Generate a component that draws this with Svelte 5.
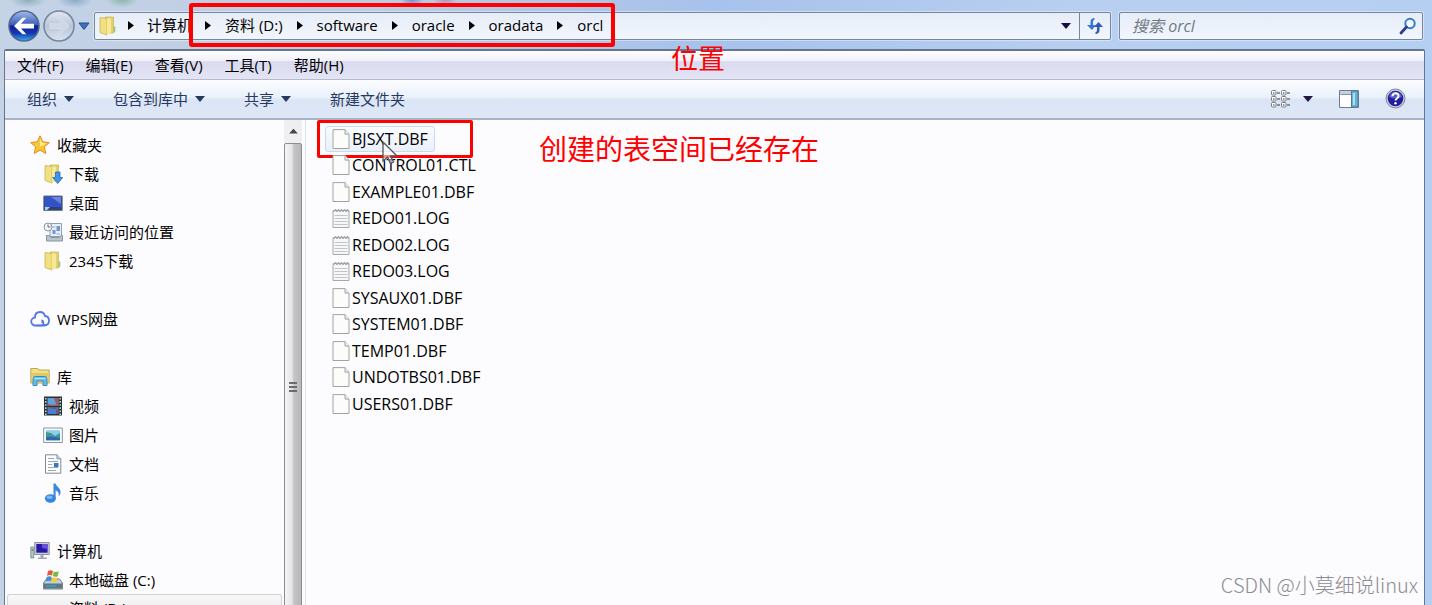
<script lang="ts">
  type NavItem = { name: string; icon: string; selected?: boolean };
  type NavGroup = NavItem & { items: NavItem[] };

  const path = ['资料 (D:)', 'software', 'oracle', 'oradata', 'orcl'];
  const menus = ['文件(F)', '编辑(E)', '查看(V)', '工具(T)', '帮助(H)'];
  const commands = [
    { name: '组织', menu: true },
    { name: '包含到库中', menu: true },
    { name: '共享', menu: true },
    { name: '新建文件夹', menu: false },
  ];

  const groups: NavGroup[] = [
    {
      name: '收藏夹',
      icon: 'star',
      items: [
        { name: '下载', icon: 'download' },
        { name: '桌面', icon: 'desktop' },
        { name: '最近访问的位置', icon: 'recent' },
        { name: '2345下载', icon: 'folder' },
      ],
    },
    { name: 'WPS网盘', icon: 'cloud', items: [] },
    {
      name: '库',
      icon: 'library',
      items: [
        { name: '视频', icon: 'video' },
        { name: '图片', icon: 'picture' },
        { name: '文档', icon: 'document' },
        { name: '音乐', icon: 'music' },
      ],
    },
    {
      name: '计算机',
      icon: 'computer',
      items: [
        { name: '本地磁盘 (C:)', icon: 'system' },
        { name: '资料 (D:)', icon: 'drive', selected: true },
      ],
    },
  ];

  const files = [
    'BJSXT.DBF',
    'CONTROL01.CTL',
    'EXAMPLE01.DBF',
    'REDO01.LOG',
    'REDO02.LOG',
    'REDO03.LOG',
    'SYSAUX01.DBF',
    'SYSTEM01.DBF',
    'TEMP01.DBF',
    'UNDOTBS01.DBF',
    'USERS01.DBF',
  ];

  let query = $state('');
  let active = $state('BJSXT.DBF');
</script>

{#snippet caret()}
  <svg class="caret" viewBox="0 0 10 6" aria-hidden="true"><path d="M0 0h10L5 6z" fill="currentColor" /></svg>
{/snippet}

{#snippet chevron()}
  <svg class="chevron" viewBox="0 0 6 9" aria-hidden="true"><path d="M0 0v9l6-4.5z" fill="#000" /></svg>
{/snippet}

{#snippet icon(name: string)}
  <svg class="icon" viewBox="0 0 20 20" aria-hidden="true">
    {#if name === 'star'}
      <path d="M10 .8l2.700 6 6.600.7-4.900 4.400 1.400 6.600L10 15.200l-5.800 3.300 1.400-6.600L.7 7.500l6.600-.7z" fill="#fbc631" stroke="#dc8d2c" stroke-linejoin="round" />
      <path d="M10 3.500l1.800 4.300 4.500.6-6.300 3z" fill="#fff0a0" />
    {:else if name === 'folder' || name === 'download'}
      <path d="M7 1h8.500v16H7z" fill="#e3cf6e" stroke="#c9b456" stroke-width=".7" />
      <path d="M2 1.500l7 1V19l-7-2.500z" fill="#f0df83" stroke="#ccb653" stroke-width=".8" />
      <path d="M9 2.500h4V17l-4 2z" fill="#f6e996" />
      {#if name === 'download'}
        <path d="M12.500 8h4.500v5.500h2.700l-5 6-5-6h2.800z" fill="#3f93ea" stroke="#2465b5" stroke-width=".8" />
      {:else}
        <path d="M15.500 10.500h1.800v5l-1.800 1.500z" fill="#9fc27d" />
      {/if}
    {:else if name === 'desktop'}
      <path d="M.8 3h18.400v14.500H.8z" fill="#263f8a" stroke="#6b7794" />
      <path d="M2 4h16v10H2z" fill="#3553c8" />
      <path d="M8 4h10v7z" fill="#6d83e3" />
      <path d="M1 15.500h18V17H1z" fill="#334961" />
      <path d="M2 14h5l-3 3H2z" fill="#9ddaf4" />
    {:else if name === 'recent'}
      <path d="M7 1.500h11.500v13H7z" fill="#e7eef7" stroke="#8fa0b5" />
      <path d="M9.500 8h3v4h-3zM13.500 4h3.500v5h-3.500z" fill="#7396cf" />
      <path d="M9.500 5h3M13.500 12h3.500" stroke="#8eabd6" />
      <path d="M3.500 13.500h3l1 2h9l1.500-2h1.500v5.500h-16z" fill="#b9c3cb" stroke="#8996a2" />
      <circle cx="5" cy="5" r="4" fill="#f3f4f5" stroke="#8c969e" />
      <path d="M5 2.500V5h2.500" fill="none" stroke="#5f6f7e" />
    {:else if name === 'cloud'}
      <path d="M5.500 16.500a4 4 0 0 1-.5-8C5 5 7.200 3 10 3c2.600 0 4.400 1.500 4.900 4 2.400.2 4.100 2 4.100 4.600 0 3-2 4.900-4.700 4.900z" fill="none" stroke="#5677ea" stroke-width="1.800" />
      <path d="M6 16.500h5.500a2.900 2.900 0 0 0 0-5.500M11.500 12.500l4 4" fill="none" stroke="#5677ea" stroke-width="1.600" />
    {:else if name === 'library'}
      <path d="M.8 1.500h7l1 1.500h10.400v13H.8z" fill="#f0df83" stroke="#bda957" />
      <path d="M1.500 6h17v4h-17z" fill="#dec968" />
      <path d="M3 18.500V12q0-2.500 2.500-2.500h9Q17 9.500 17 12v6.500h-4V14H7v4.500z" fill="#66bde9" stroke="#378db9" />
      <path d="M4.500 11.500h11" stroke="#b9e9fa" />
    {:else if name === 'video'}
      <path d="M1 .5h18v19H1z" fill="#293038" />
      <path d="M4.500 2h11v8h-11z" fill="#5ca4dc" />
      <path d="M4.500 11h11v7h-11z" fill="#487fd0" />
      <path d="M11 2h4.500v6H13zM5 8l5 1 5-1v2H5z" fill="#9f5c5a" />
      <path d="M5 11h10l-2 2v5h2.500v-3L13 13l-6-.5z" fill="#795463" />
      <path d="M2.800 2v17M17.200 2v17" stroke="#d4e2e4" stroke-width="1.400" stroke-dasharray="1.600 1.500" />
    {:else if name === 'picture'}
      <path d="M.7 3h18.600v14.500H.7z" fill="#fff" stroke="#8496a7" />
      <path d="M3 5.200h14v10H3z" fill="#8bcdf0" />
      <path d="M3 7l5 1 4 3 5-3v7.200H3z" fill="#3f9b91" />
      <path d="M3 12q6-1 14 1v2.200H3z" fill="#3165b3" />
    {:else if name === 'document'}
      <path d="M2.500.8H14l3.800 4v14.400H2.500z" fill="#fbfcfd" stroke="#818a92" />
      <path d="M14 .8v4h3.800" fill="#d5e2ed" stroke="#818a92" />
      <path d="M5 4.500h6M5 7.500h10M5 10.500h4M5 13.500h10M5 16.500h8" stroke="#9da9b3" />
      <path d="M11 9h4.500v4H11z" fill="#3778c3" />
    {:else if name === 'music'}
      <path d="M10.500.5h2c.5 3 5.700 4.500 5 9.300-.2 1.600-1 2.900-1.900 3.500 1-3.500-.8-4.800-3-6v8.300h-2.100z" fill="#3987dc" />
      <ellipse cx="7.400" cy="15.500" rx="5.500" ry="4.200" fill="#3485e5" />
      <ellipse cx="6.500" cy="14.300" rx="3" ry="1.700" fill="#7ab7f7" />
    {:else if name === 'computer'}
      <path d="M.8 6h3v11h-3z" fill="#b8c7bd" stroke="#77877d" stroke-width=".8" />
      <path d="M1.500 8h1.500v2H1.500z" fill="#52a44b" />
      <path d="M4.700 1.500h14.500v12H4.700z" fill="#c9ccda" stroke="#8d91a9" />
      <path d="M6.300 3h11.300v8.700H6.300z" fill="#2719a1" />
      <path d="M12 3h5.600v5L12 7z" fill="#6750da" />
      <path d="M10.500 14h3v2.500H17V18H8v-1.500h2.500z" fill="#9fa7af" />
    {:else}
      <path d="M3.500 9h13L19.500 13v6H.5v-6z" fill="#c6cdd2" stroke="#76828c" />
      <path d="M1 13.500h18v5H1z" fill="#607683" />
      <path d="M3 15h10v2H3z" fill="#399bb1" />
      {#if name === 'system'}
        <path d="M5 1q2.500-1.400 5 0L9 5.500q-2.500-1-5 .4z" fill="#e45c2f" />
        <path d="M10.800 1.400q2.500 1.200 5-.2l-1.100 5q-2.500 1.200-4.900-.3z" fill="#75b947" />
        <path d="M3.700 7q2.500-1.400 5-.3l-1 4.500q-2.600-1.200-5 .3z" fill="#418dd5" />
        <path d="M9.600 7.100q2.500 1.400 4.900.2l-1.200 4.600q-2.500 1-4.800-.4z" fill="#f8c93b" />
      {/if}
    {/if}
  </svg>
{/snippet}

{#snippet fileIcon(name: string)}
  <svg class="file-icon" viewBox="0 0 18 20" aria-hidden="true">
    {#if name.endsWith('.LOG')}
      <path d="M1 2.500h16v17H1z" fill="#f7f7f7" stroke="#a8a8a8" />
      <path d="M2.500 7.500h13M2.500 10.500h13M2.500 13.500h13M2.500 16.500h13" stroke="#bfc6cb" />
      <path d="M2 4l1.500-3L5 4l1.500-3L8 4l1.500-3L11 4l1.500-3L14 4l1.500-3 1 3" fill="none" stroke="#a2a2a2" />
    {:else}
      <path d="M1 .6h12l4 4.500v14.400H1z" fill="#fcfcfb" stroke="#a2a2a2" />
      <path d="M13 .6v4.500h4" fill="#eee" stroke="#a2a2a2" />
    {/if}
  </svg>
{/snippet}

<div class="explorer">
  <header class="nav-bar">
    <button class="round" aria-label="后退">
      <svg viewBox="0 0 32 32" aria-hidden="true">
        <defs>
          <linearGradient id="back" x1="0" y1="0" x2="0" y2="1">
            <stop offset="0" stop-color="#a3bce8" />
            <stop offset=".45" stop-color="#3c5fbd" />
            <stop offset=".5" stop-color="#10209a" />
            <stop offset=".75" stop-color="#1438b4" />
            <stop offset="1" stop-color="#38b0ef" />
          </linearGradient>
        </defs>
        <circle cx="16" cy="16" r="15" fill="url(#back)" stroke="#53668c" stroke-width="1.500" />
        <path d="M6 16l8.500-8.200h3.800L13 13.800h13v4.600H13l5.300 5.900h-3.800z" fill="#fff" />
      </svg>
    </button>
    <button class="round" aria-label="前进">
      <svg viewBox="0 0 32 32" aria-hidden="true">
        <defs>
          <linearGradient id="forward" x1="0" y1="0" x2="0" y2="1">
            <stop offset="0" stop-color="#e3e8f0" />
            <stop offset=".5" stop-color="#b9c6d9" />
            <stop offset="1" stop-color="#d9e2f0" />
          </linearGradient>
        </defs>
        <circle cx="16" cy="16" r="15" fill="url(#forward)" stroke="#76839b" stroke-width="1.500" />
        <path d="M26 16l-8.500-8.200h-3.800l5.300 6H7v4.600h12l-5.300 5.900h3.800z" fill="#cdd7e5" stroke="#d6dfea" />
      </svg>
    </button>
    <button class="history" aria-label="最近的页面">
      <svg viewBox="0 0 12 9" aria-hidden="true"><path d="M1 1h10L6 7.500z" fill="#3c72bd" stroke="#24488c" /></svg>
    </button>

    <div class="address">
      {@render icon('folder')}
      <nav class="crumbs" aria-label="地址">
        {@render chevron()}
        <a href="#computer">计算机</a>
        <span class="marked">
          {#each path as part}
            {@render chevron()}
            <a href="#{part}">{part}</a>
          {/each}
        </span>
      </nav>
      <button class="drop" aria-label="以前的位置">{@render caret()}</button>
      <button class="refresh" aria-label="刷新">
        <svg viewBox="0 0 18 18" aria-hidden="true">
          <path d="M8 1Q4.500 1.500 4.500 5v3H1l5 5 4-5H7V5q0-2 2-3z" fill="#3678cb" />
          <path d="M10 17q3.500-.5 3.500-4v-3H17l-4.500-5L8 10h3v3q0 2-2 3z" fill="#3158b6" />
        </svg>
      </button>
    </div>

    <div class="search">
      <input type="search" aria-label="搜索 orcl" placeholder="搜索 orcl" bind:value={query} />
      <svg viewBox="0 0 18 18" aria-hidden="true">
        <circle cx="11" cy="6.500" r="4.700" fill="#f3f8fe" stroke="#397cc6" stroke-width="2" />
        <path d="M7.500 10L2 16" stroke="#293e91" stroke-width="2.800" stroke-linecap="round" />
      </svg>
    </div>
    <span class="note note-path">位置</span>
  </header>

  <div class="window">
    <div class="menu-bar">
      {#each menus as menu}
        <button>{menu}</button>
      {/each}
    </div>

    <div class="toolbar">
      {#each commands as command}
        <button class="command">
          {command.name}
          {#if command.menu}{@render caret()}{/if}
        </button>
      {/each}
      <div class="tools">
        <button class="view" aria-label="更改您的视图">
          <svg class="view-icon" viewBox="0 0 20 18" aria-hidden="true">
            {#each [0, 10] as x}
              {#each [1, 7, 13] as y}
                <rect x={x + 0.5} y={y - 0.5} width="4.500" height="4.500" rx="1" fill="#fff" stroke="#777d86" />
                <path d="M{x + 2} {y + 2}h1.500M{x + 6} {y + 2}h3" stroke="#6f7580" stroke-width="1.300" />
              {/each}
            {/each}
          </svg>
          {@render caret()}
        </button>
        <button aria-label="显示预览窗格">
          <svg class="pane-icon" viewBox="0 0 20 18" aria-hidden="true">
            <path d="M.5.5h19v17H.5z" fill="#fff" stroke="#667c94" />
            <path d="M1 1h18v3.500H1z" fill="#c5d1df" />
            <path d="M1.500 4.500h11" stroke="#8293a6" />
            <path d="M12.500 1h6.500v16h-6.500z" fill="#62b5d7" stroke="#5b7892" />
            <path d="M14 3h2v12h-2z" fill="#a9e0ef" />
          </svg>
        </button>
        <button aria-label="获取帮助">
          <svg class="help-icon" viewBox="0 0 21 21" aria-hidden="true">
            <circle cx="10.500" cy="10.500" r="9.500" fill="#c8cddb" stroke="#82899f" />
            <circle cx="10.500" cy="10.500" r="7.800" fill="#251d9f" />
            <path d="M4 9a6.700 6.700 0 0 1 13 0q-6 3-13 0z" fill="#5363c4" />
            <path d="M7.500 8.300c0-4 6.300-3.900 6 0-.2 2-2.900 2-2.900 4.300" fill="none" stroke="#fff" stroke-width="2" />
            <circle cx="10.500" cy="15.200" r="1.200" fill="#fff" />
          </svg>
        </button>
      </div>
    </div>

    <div class="body">
      <nav class="sidebar" aria-label="导航窗格">
        {#each groups as group}
          <section>
            <a class="entry" href="#{group.icon}">{@render icon(group.icon)}{group.name}</a>
            {#each group.items as item}
              <a class="entry child" class:selected={item.selected} href="#{item.icon}">
                {@render icon(item.icon)}{item.name}
              </a>
            {/each}
          </section>
        {/each}
      </nav>
      <div class="scrollbar" aria-hidden="true">
        <svg viewBox="0 0 18 24"><path d="M5 14l4.500-5 4.500 5z" fill="#444" /></svg>
        <div class="thumb"><i></i><i></i><i></i></div>
      </div>

      <main>
        <ul>
          {#each files as file, i}
            <li class:marked-file={i === 0}>
              <button class="file" class:active={file === active} onclick={() => (active = file)}>
                {@render fileIcon(file)}{file}
              </button>
            </li>
          {/each}
        </ul>
        <svg class="pointer" viewBox="0 0 16 24" aria-hidden="true">
          <path d="M1 1v19l4.500-4 3 6.500 3-1.500-3-6H15z" fill="#fff" fill-opacity=".55" stroke="#555" stroke-width="1.300" />
        </svg>
        <span class="note note-file">创建的表空间已经存在</span>
        <span class="watermark">CSDN @小莫细说linux</span>
      </main>
    </div>
  </div>
</div>

<style>
  :global(body) {
    margin: 0;
    overflow: hidden;
  }

  .explorer {
    display: flex;
    flex-direction: column;
    box-sizing: border-box;
    height: 100vh;
    padding: 0 7px 0 4px;
    font-family: 'Open Sans', 'Noto Sans CJK SC', sans-serif;
    font-size: 15px;
    line-height: 20px;
    color: #000;
    background:
      radial-gradient(ellipse at 28px 0, #6d9fa5aa 0, transparent 18px),
      radial-gradient(ellipse at 75px 0, #6f98b8aa 0, transparent 18px),
      radial-gradient(ellipse at 122px 0, #6faa88aa 0, transparent 16px),
      radial-gradient(ellipse at 412px 0, #5576c4aa 0, transparent 12px),
      radial-gradient(ellipse at 445px 0, #ad7fa0aa 0, transparent 12px),
      linear-gradient(90deg, #c5d3e7 0, #bccce2 25%, #a7c2ec 50%, #b8cff0 75%, #b5cff3 100%);
  }

  button,
  input {
    padding: 0;
    border: 0;
    background: none;
    color: inherit;
    font: inherit;
  }

  a {
    color: inherit;
    text-decoration: none;
  }

  svg {
    display: block;
    flex-shrink: 0;
  }

  .icon {
    width: 20px;
    height: 20px;
  }

  .caret {
    width: 10px;
    height: 6px;
  }

  .chevron {
    width: 6px;
    height: 9px;
  }

  .nav-bar {
    position: relative;
    display: flex;
    align-items: center;
    flex-shrink: 0;
    height: 49px;
    padding: 3px 2px 0 4px;
    box-sizing: border-box;
  }

  .round svg {
    width: 32px;
    height: 32px;
  }

  .round {
    margin-right: 3px;
  }

  .history svg {
    width: 12px;
    height: 9px;
  }

  .address,
  .search {
    display: flex;
    align-items: center;
    box-sizing: border-box;
    height: 28px;
    border: 1px solid #75869d;
    border-radius: 2px;
    background: linear-gradient(#e6edf7, #f2f6fd);
    box-shadow: 0 0 0 1px #ffffff66;
  }

  .address {
    flex: 1;
    margin: 0 8px 0 4px;
    padding-left: 3px;
  }

  .crumbs,
  .marked {
    display: flex;
    align-items: center;
    gap: 13px;
    white-space: nowrap;
  }

  .crumbs {
    flex: 1;
    padding: 0 0 2px 10px;
  }

  .marked {
    position: relative;
    gap: 14px;
  }

  .marked::after {
    content: '';
    position: absolute;
    inset: -12px -12px -12px -16px;
    border: 4px solid #f00;
    border-radius: 3px;
    pointer-events: none;
  }

  .drop {
    width: 26px;
    padding-left: 8px;
    color: #160d44;
    box-sizing: border-box;
  }

  .refresh {
    display: grid;
    place-items: center;
    width: 31px;
    height: 100%;
    border-left: 1px solid #75869d;
  }

  .refresh svg,
  .search svg {
    width: 18px;
    height: 18px;
  }

  .search {
    width: 304px;
    padding: 0 5px 0 12px;
  }

  .search input {
    flex: 1;
    min-width: 0;
    outline: none;
    font-size: 16px;
    font-style: italic;
  }

  .search input::placeholder {
    color: #737983;
    opacity: 1;
  }

  .window {
    display: flex;
    flex: 1;
    flex-direction: column;
    min-height: 0;
    border: 1px solid #65758f;
    border-width: 2px 1px 0;
    border-radius: 2px 2px 0 0;
    background: #fcfbfe;
  }

  .menu-bar {
    display: flex;
    align-items: center;
    gap: 22px;
    flex-shrink: 0;
    box-sizing: border-box;
    height: 29px;
    padding: 0 0 1px 12px;
    border-bottom: 1px solid #b5bacd;
    background: linear-gradient(#fdfdff 0, #f0f1f9 35%, #d9daef 38%, #e3e4f4 100%);
  }

  .toolbar {
    display: flex;
    align-items: center;
    gap: 39px;
    flex-shrink: 0;
    box-sizing: border-box;
    height: 40px;
    padding: 0 18px 1px 22px;
    border-bottom: 2px solid #a7b5c8;
    background: linear-gradient(#fcfdff 0, #eaf1fb 45%, #dae5f5 52%, #dfe7f6 100%);
    color: #27395f;
  }

  .command,
  .view {
    display: flex;
    align-items: center;
    gap: 7px;
  }

  .tools {
    display: flex;
    align-items: center;
    gap: 26px;
    margin-left: auto;
  }

  .view {
    gap: 12px;
    color: #201944;
  }

  .view-icon,
  .pane-icon {
    width: 20px;
    height: 18px;
  }

  .help-icon {
    width: 21px;
    height: 21px;
  }

  .body {
    display: flex;
    flex: 1;
    min-height: 0;
    overflow: hidden;
  }

  .sidebar {
    width: 279px;
    padding-top: 10px;
    overflow: hidden;
    box-sizing: border-box;
  }

  section {
    margin-bottom: 29px;
  }

  .entry {
    display: flex;
    align-items: center;
    gap: 7px;
    box-sizing: border-box;
    height: 29px;
    padding-left: 25px;
  }

  .child {
    gap: 6px;
    padding-left: 38px;
  }

  .selected {
    height: 27px;
    margin: 0 2px;
    padding-left: 36px;
    border-radius: 3px;
    background: linear-gradient(#f9f9fa, #e5e5e7);
    box-shadow: inset 0 0 0 1px #d2d2d6;
  }

  .scrollbar {
    display: flex;
    flex-direction: column;
    width: 18px;
    margin-right: 3px;
    background: #efeff1;
  }

  .scrollbar svg {
    width: 18px;
    height: 23px;
  }

  /* the thumb runs on below the bottom edge */
  .thumb {
    display: flex;
    flex: 1;
    flex-direction: column;
    align-items: center;
    justify-content: center;
    gap: 2px;
    margin-bottom: -26px;
    border: 1px solid #8d8d91;
    border-radius: 2px;
    background: linear-gradient(90deg, #f5f5f6 0, #e4e4e6 45%, #c5c5c9 55%, #b7b7bc 100%);
  }

  .thumb i {
    width: 8px;
    height: 2px;
    background: #6b6b70;
  }

  main {
    position: relative;
    flex: 1;
    border-left: 1px solid #dce6ee;
  }

  ul {
    display: flex;
    flex-direction: column;
    align-items: flex-start;
    margin: 0;
    padding: 6px 0 0 19px;
    list-style: none;
  }

  li {
    position: relative;
    height: 26px;
  }

  li:nth-child(even) {
    height: 27px;
  }

  .file {
    display: flex;
    align-items: center;
    gap: 2px;
    box-sizing: border-box;
    height: 26px;
    padding: 0 6px;
    border: 1px solid transparent;
    border-radius: 3px;
    font-size: 16px;
  }

  .file.active {
    border-color: #c9d8ee;
    background: linear-gradient(#fafcff, #e9f0fb);
  }

  .file-icon {
    width: 18px;
    height: 20px;
  }

  .marked-file::after {
    content: '';
    position: absolute;
    top: -6px;
    left: -8px;
    width: 150px;
    height: 32px;
    border: 3px solid #f00;
    border-radius: 2px;
    pointer-events: none;
  }

  .pointer {
    position: absolute;
    top: 21px;
    left: 76px;
    width: 16px;
    height: 24px;
  }

  .note {
    position: absolute;
    color: #f00;
    font-family: 'Noto Sans CJK SC', sans-serif;
    line-height: 32px;
    white-space: nowrap;
  }

  .note-path {
    top: 42px;
    left: 667px;
    z-index: 1;
    font-size: 27px;
  }

  .note-file {
    top: 12px;
    left: 233px;
    font-size: 28px;
  }

  .watermark {
    position: absolute;
    right: 6px;
    bottom: 5px;
    color: #8c8c91;
    font-family: 'Noto Sans CJK SC', sans-serif;
    font-size: 20px;
    font-weight: 300;
    line-height: 30px;
  }
</style>
